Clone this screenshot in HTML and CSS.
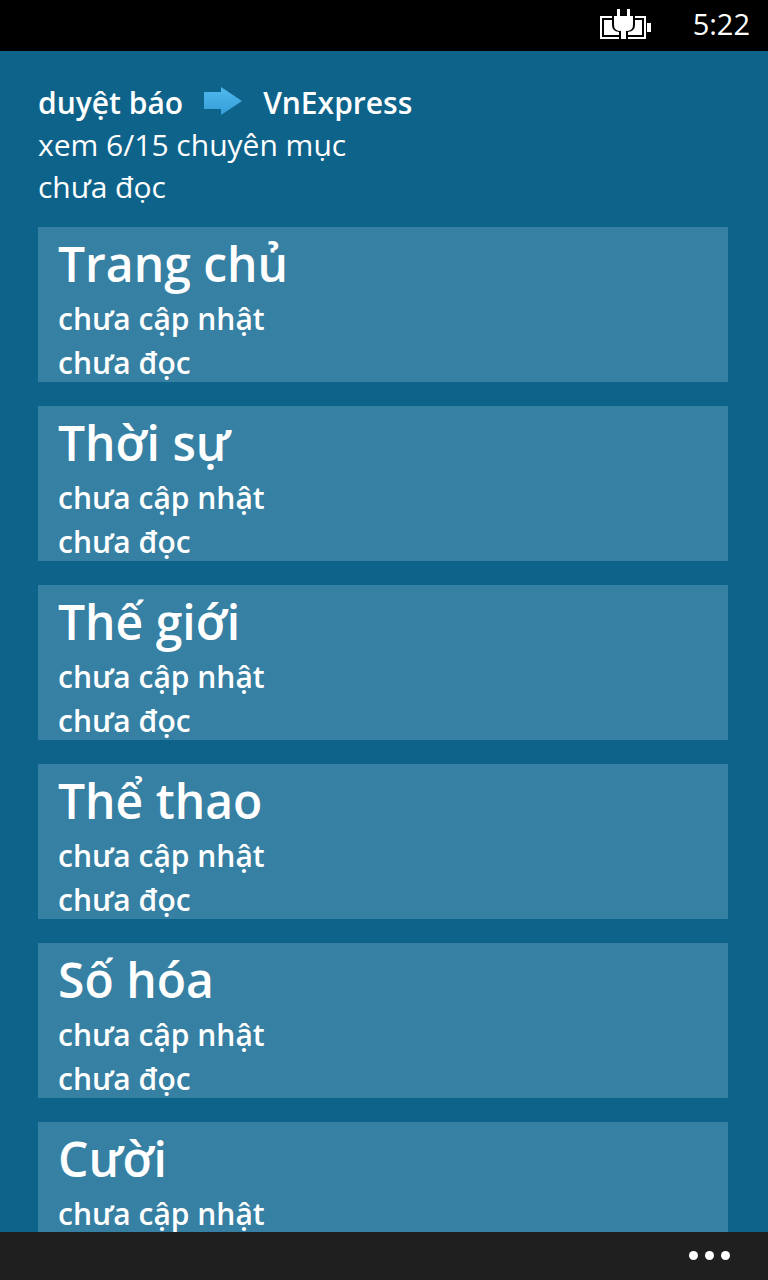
FILE: index.html
```html
<!DOCTYPE html>
<html lang="vi">
<head>
<meta charset="utf-8">
<meta name="viewport" content="width=device-width, initial-scale=1">
<title>VnExpress</title>
<link rel="stylesheet" href="styles.css">
</head>
<body class="phone">
<div class="status">
  <svg class="battery" width="52" height="30" viewBox="0 0 52 30" role="img" aria-label="Đang sạc">
    <path d="M1 8h44v21H1z" fill="none" stroke="#fff" stroke-width="2"/>
    <path d="M4 11h38v15H4z" fill="#fff"/>
    <path d="M47 14h4v9h-4z" fill="#fff"/>
    <path d="M12 5h23v11q0 6-7 7v7h-9v-7q-7-1-7-7z" fill="#000"/>
    <path d="M17 0h3v7h7V0h3v7h3v9q0 6-7 6v8h-5v-8q-7 0-7-6V7h3z" fill="#fff"/>
  </svg>
  <time class="clock">5:22</time>
</div>
<main class="page">
  <header class="heading">
    <h1 class="crumbs">
      <span>duyệt báo</span>
      <svg class="arrow" width="40" height="30" viewBox="0 0 40 30" aria-hidden="true">
        <defs><linearGradient id="arrow-fill" x1="0" y1="0" x2="0" y2="1"><stop offset="0" stop-color="#50b9ee"/><stop offset="1" stop-color="#359dd7"/></linearGradient></defs>
        <path d="M1 6h17V1l21 14-21 14v-6H1z" fill="url(#arrow-fill)"/>
      </svg>
      <span>VnExpress</span>
    </h1>
    <p class="summary">xem 6/15 chuyên mục</p>
    <p class="summary">chưa đọc</p>
  </header>
  <ul class="sections">
    <li><button class="card" type="button"><span class="name">Trang chủ</span><span class="note">chưa cập nhật</span><span class="note">chưa đọc</span></button></li>
    <li><button class="card" type="button"><span class="name">Thời sự</span><span class="note">chưa cập nhật</span><span class="note">chưa đọc</span></button></li>
    <li><button class="card" type="button"><span class="name">Thế giới</span><span class="note">chưa cập nhật</span><span class="note">chưa đọc</span></button></li>
    <li><button class="card" type="button"><span class="name">Thể thao</span><span class="note">chưa cập nhật</span><span class="note">chưa đọc</span></button></li>
    <li><button class="card" type="button"><span class="name">Số hóa</span><span class="note">chưa cập nhật</span><span class="note">chưa đọc</span></button></li>
    <li><button class="card" type="button"><span class="name">Cười</span><span class="note">chưa cập nhật</span></button></li>
  </ul>
</main>
<footer class="appbar">
  <button class="more" type="button" aria-label="Thêm"><i class="dot"></i><i class="dot"></i><i class="dot"></i></button>
</footer>
</body>
</html>
```
FILE: styles.css
```css
* { box-sizing: border-box; }
.phone {
  margin: 0;
  height: 100vh;
  display: flex;
  flex-direction: column;
  overflow: hidden;
  background: #0e638a;
  color: #fff;
  font-family: "Open Sans", "Noto Sans", sans-serif;
  font-size: 30px;
}
.status {
  flex: none;
  display: flex;
  justify-content: flex-end;
  align-items: center;
  gap: 41px;
  padding: 0 18px 3px;
  background: #000;
}
.battery { display: block; }
.clock { font-size: 29px; line-height: 48px; }
.page {
  flex: 1;
  min-height: 0;
  overflow: hidden;
  padding: 30px 40px 0 38px;
}
.heading { margin-bottom: 19px; }
.crumbs {
  display: flex;
  align-items: center;
  gap: 20px;
  margin: 0;
  font-size: 30px;
  font-weight: 600;
  line-height: 43px;
}
.arrow { margin-bottom: 4px; }
.summary { margin: 0; line-height: 42px; }
.sections {
  display: flex;
  flex-direction: column;
  gap: 24px;
  margin: 0;
  padding: 0;
  list-style: none;
}
.card {
  display: flex;
  flex-direction: column;
  gap: 6px;
  width: 100%;
  margin: 0;
  padding: 6px 20px 0;
  border: 0;
  background: #3680a3;
  color: inherit;
  font: inherit;
  font-weight: 600;
  text-align: left;
}
.name { font-size: 48px; line-height: 61px; }
.note { font-size: 30px; line-height: 38px; }
.appbar {
  flex: none;
  display: flex;
  justify-content: flex-end;
  height: 48px;
  padding: 0 32px 2px;
  background: #1f1f1f;
}
.more {
  display: flex;
  align-items: center;
  gap: 7px;
  padding: 0 6px;
  border: 0;
  background: none;
}
.dot { width: 9px; height: 9px; border-radius: 50%; background: #fff; }
```
